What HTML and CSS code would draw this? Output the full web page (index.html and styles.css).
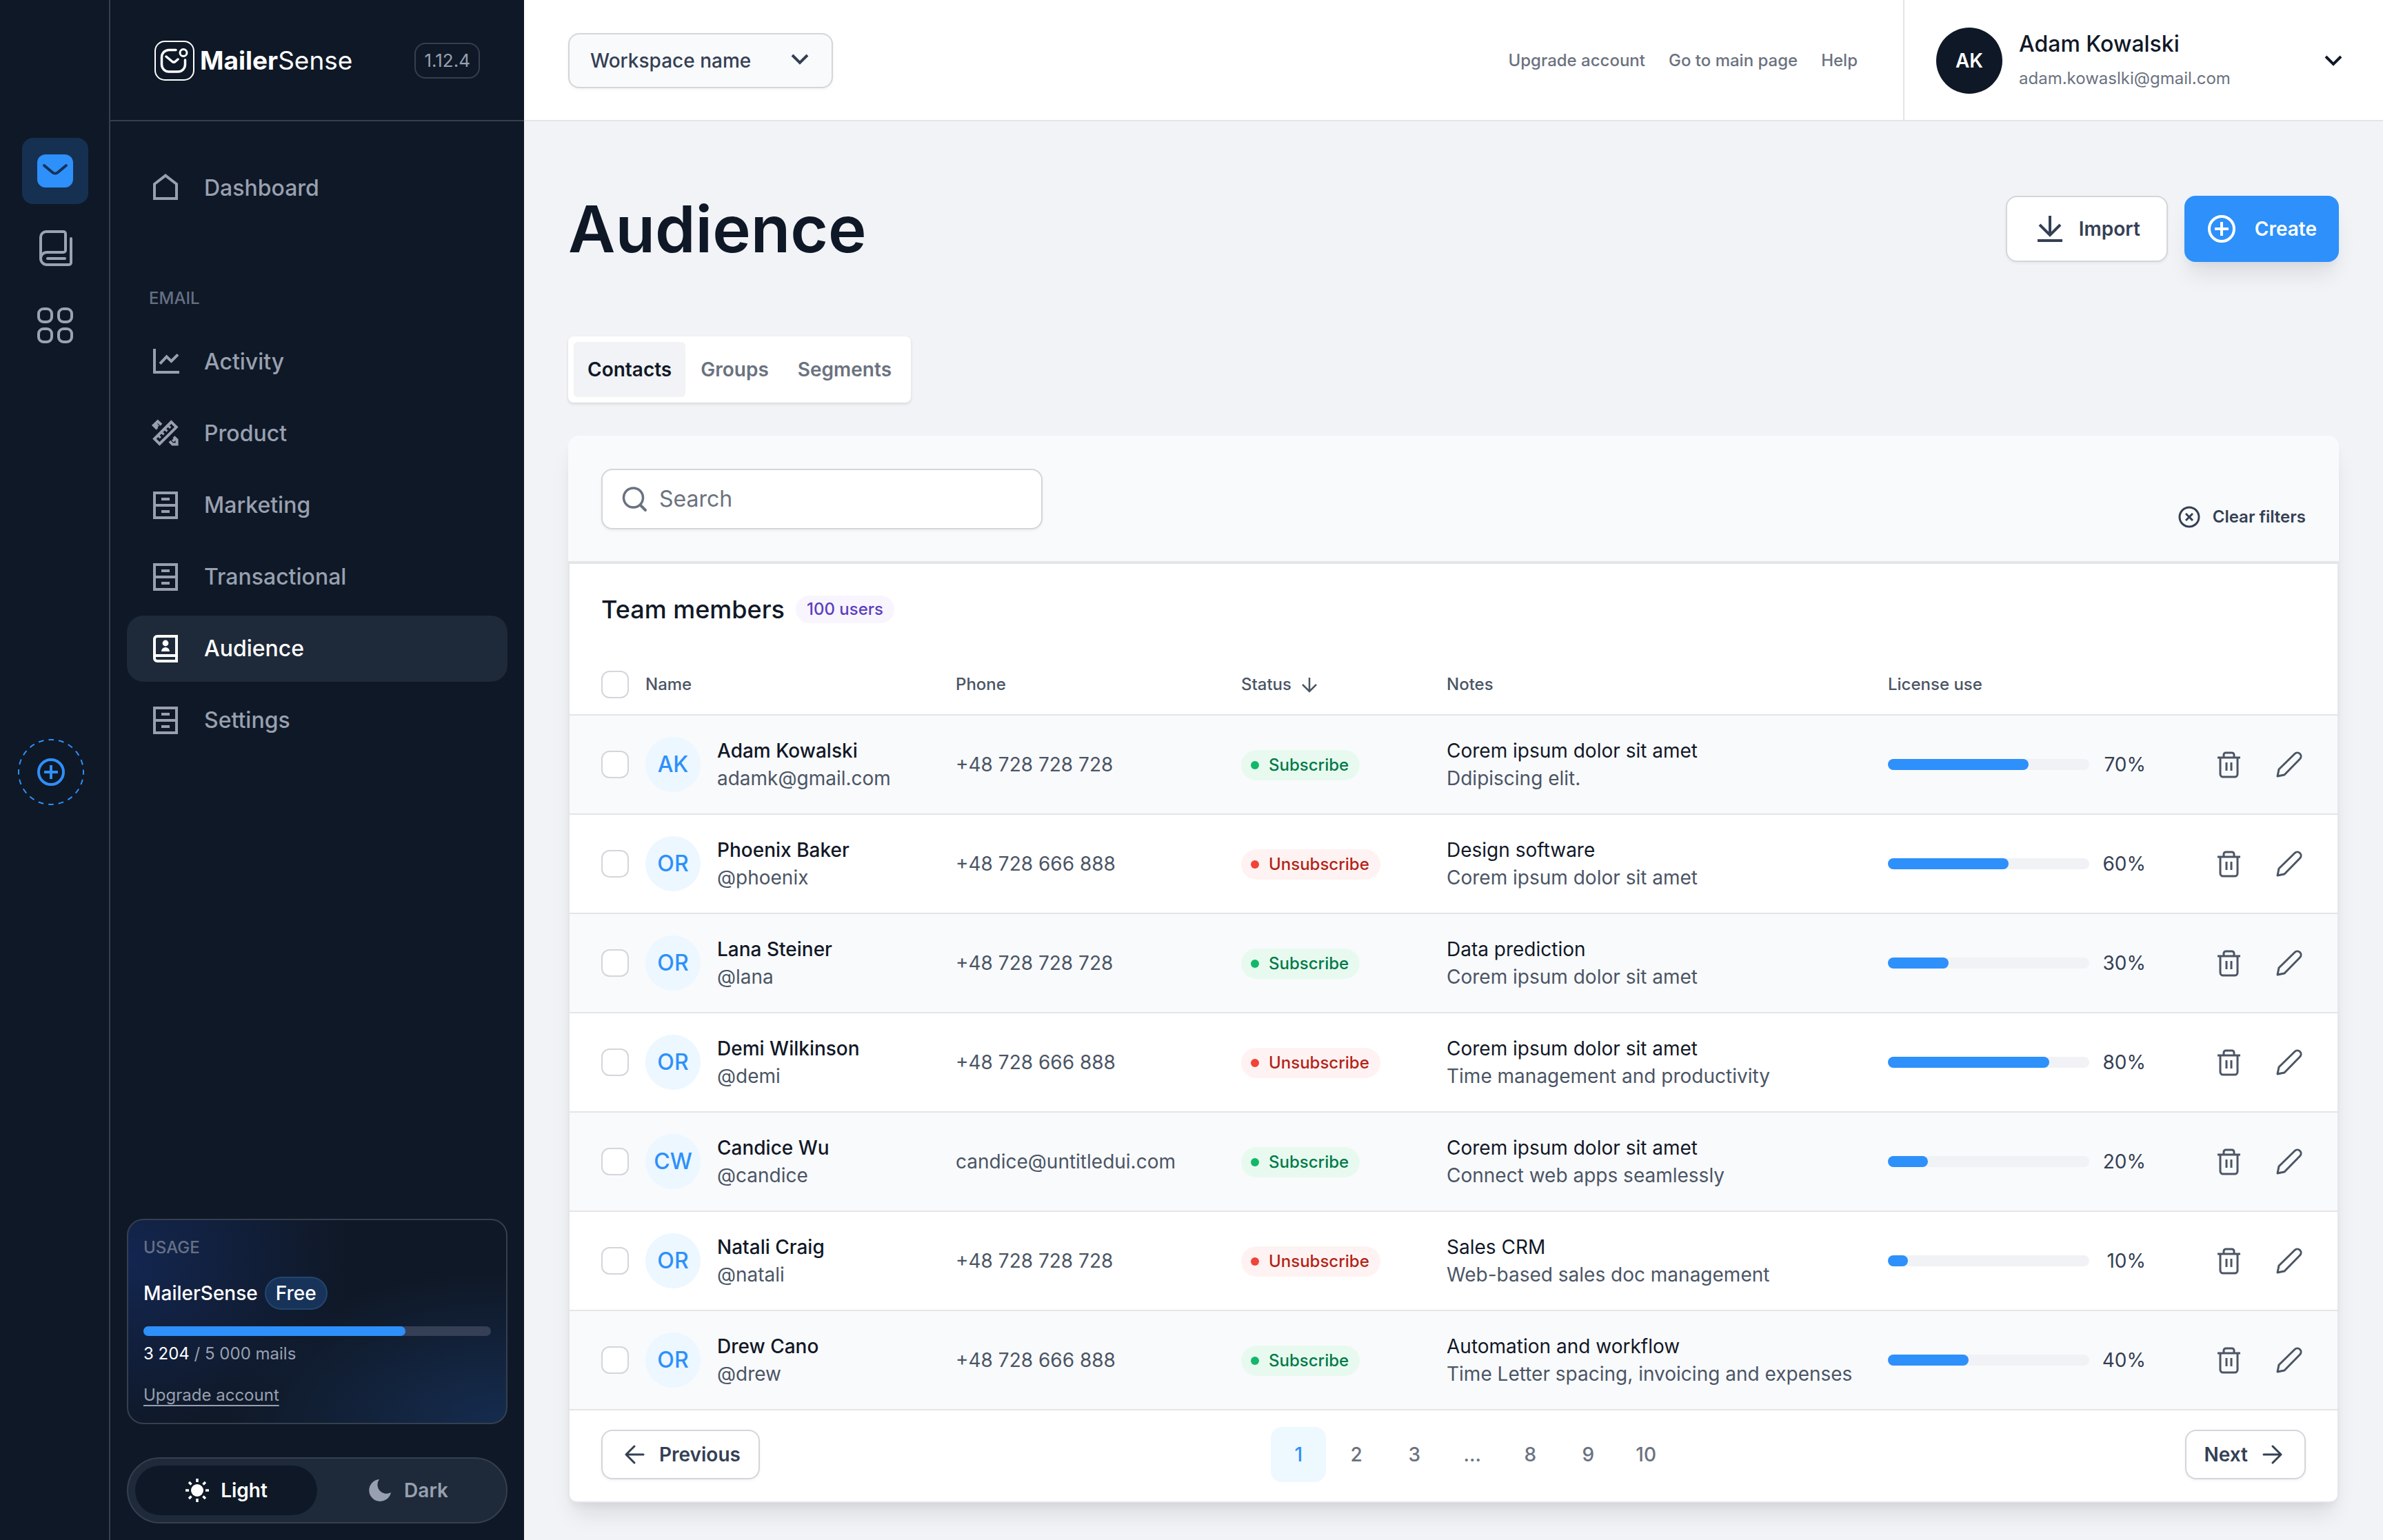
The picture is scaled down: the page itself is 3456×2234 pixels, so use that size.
FILE: index.html
```html
<!DOCTYPE html>
<html lang="en">
<head>
<meta charset="utf-8">
<title>MailerSense – Audience</title>
<meta name="viewport" content="width=device-width, initial-scale=1">
<link rel="stylesheet" href="styles.css">
</head>
<body>
<svg class="sprite" aria-hidden="true">
  <symbol id="i-cabinet" viewBox="0 0 24 24"><path d="M4 3h16v18H4zM4 12h16M9 7.5h6M9 16.5h6" fill="none" stroke="currentColor" stroke-width="2"/></symbol>
  <symbol id="i-chevron" viewBox="0 0 40 40"><path d="M9 14l11 11 11-11" fill="none" stroke="currentColor" stroke-width="4"/></symbol>
  <symbol id="i-plus-circle" viewBox="0 0 40 40"><circle cx="20" cy="20" r="18" fill="none" stroke="currentColor" stroke-width="4"/><path d="M20 10v20M10 20h20" fill="none" stroke="currentColor" stroke-width="4"/></symbol>
  <symbol id="i-trash" viewBox="0 0 40 40"><path d="M4 10h33M13 10V6a3 3 0 0 1 3-3h9a3 3 0 0 1 3 3v4M8 10v24a4 4 0 0 0 4 4h17a4 4 0 0 0 4-4V10M17 17v12M24 17v12" fill="none" stroke="currentColor" stroke-width="3"/></symbol>
  <symbol id="i-pencil" viewBox="0 0 40 40"><path d="M3 37l2-10L28 4.500a5 5 0 0 1 7.500 7.500L13 35z" fill="none" stroke="currentColor" stroke-width="3" stroke-linejoin="round"/></symbol>
  <symbol id="i-arrow" viewBox="0 0 32 32"><path d="M3 16h25M16 4l12 12-12 12" fill="none" stroke="currentColor" stroke-width="3" stroke-linecap="round" stroke-linejoin="round"/></symbol>
</svg>

<div class="app">
  <aside class="rail">
    <nav class="rail-nav" aria-label="Apps">
      <a class="rail-link is-active" href="#" aria-label="Mail">
        <svg class="icon-56" viewBox="0 0 56 56"><rect x="2" y="4" width="52" height="48" rx="12" fill="#2e90fa"/><path d="M12 20l12 10a6 6 0 0 0 8 0l12-10" fill="none" stroke="#163257" stroke-width="4" stroke-linecap="round"/></svg>
      </a>
      <a class="rail-link" href="#" aria-label="Library">
        <svg class="icon-56" viewBox="0 0 56 56"><path d="M7 43V12a8 8 0 0 1 8-8h25a3 3 0 0 1 3 3v24a3 3 0 0 1-3 3H16a9 9 0 0 0 0 18h32a3 3 0 0 0 3-3V14M17 43h25" fill="none" stroke="currentColor" stroke-width="4" stroke-linecap="round"/></svg>
      </a>
      <a class="rail-link" href="#" aria-label="All apps">
        <svg class="icon-56" viewBox="0 0 56 56" fill="none" stroke="currentColor" stroke-width="4"><rect x="4" y="4" width="19" height="19" rx="7"/><rect x="33" y="4" width="19" height="19" rx="7"/><rect x="4" y="33" width="19" height="19" rx="7"/><rect x="33" y="33" width="19" height="19" rx="7"/></svg>
      </a>
    </nav>
    <button class="rail-add" type="button" aria-label="Add app">
      <svg class="rail-ring" viewBox="0 0 96 96"><circle cx="48" cy="48" r="47" fill="none" stroke="currentColor" stroke-width="2" stroke-dasharray="7.700 7.060" stroke-dashoffset="3.850"/></svg>
      <svg class="icon-40" viewBox="0 0 40 40"><use href="#i-plus-circle"/></svg>
    </button>
  </aside>

  <aside class="sidebar">
    <header class="brand">
      <a class="brand-link" href="#">
        <svg class="brand-logo" viewBox="0 0 58 58" fill="none" stroke="currentColor"><rect x="1" y="1" width="56" height="56" rx="14" stroke-width="2"/><path d="M31 13.500H21A10.500 10.500 0 0 0 10.500 24v10.500A10.500 10.500 0 0 0 21 45h13a10.500 10.500 0 0 0 10.500-10.500V28" stroke-width="3.500" stroke-linecap="round"/><path d="M17 23l9 7.500q2 1.500 4 0l4-3.500" stroke-width="3.500" stroke-linecap="round"/><circle cx="42" cy="17.500" r="5" stroke-width="3"/></svg>
        <span class="brand-name"><b>Mailer</b>Sense</span>
      </a>
      <span class="version">1.12.4</span>
    </header>

    <nav class="menu" aria-label="Main">
      <a class="menu-item" href="#"><svg class="icon-48" viewBox="0 0 24 24"><path d="M4 9l8-6.200L20 9v10.500H4z" fill="none" stroke="currentColor" stroke-width="2"/></svg>Dashboard</a>
      <h2 class="menu-title">EMAIL</h2>
      <a class="menu-item" href="#"><svg class="icon-48" viewBox="0 0 24 24"><path d="M4 2.500v17h18M8 13.300l4.800-5.100 3.400 3.300L21 6.700" fill="none" stroke="currentColor" stroke-width="2"/></svg>Activity</a>
      <a class="menu-item" href="#"><svg class="icon-48" viewBox="0 0 24 24" fill="none" stroke="currentColor"><path d="M16.200 3.600l3.700 3.700L7.700 19.500l-3.700-3.700z" stroke-width="2"/><path d="M6.500 13.200l1.900 1.900M8.900 10.800l1.900 1.900M11.300 8.400l1.900 1.900M13.700 6l1.900 1.900" stroke-width="1.600"/><path d="M6 8.600L3.400 6l3-2.900L9 5.600M5 7.200l1.700-1.700M15 17.600l2.100 2.200h3.200v-3.200L18 14.300M17.200 17.600l1.500-1.500" stroke-width="2"/></svg>Product</a>
      <a class="menu-item" href="#"><svg class="icon-48" viewBox="0 0 24 24"><use href="#i-cabinet"/></svg>Marketing</a>
      <a class="menu-item" href="#"><svg class="icon-48" viewBox="0 0 24 24"><use href="#i-cabinet"/></svg>Transactional</a>
      <a class="menu-item is-active" href="#" aria-current="page"><svg class="icon-48" viewBox="0 0 24 24"><path d="M20 3H6a2 2 0 0 0-2 2v14a2 2 0 0 0 2 2h14zM4 17h16" fill="none" stroke="currentColor" stroke-width="2"/><circle cx="12" cy="8" r="2.200" fill="currentColor"/><path d="M9 14a3 3 0 0 1 6 0z" fill="currentColor"/></svg>Audience</a>
      <a class="menu-item" href="#"><svg class="icon-48" viewBox="0 0 24 24"><use href="#i-cabinet"/></svg>Settings</a>
    </nav>

    <section class="usage">
      <h2 class="usage-title">USAGE</h2>
      <p class="usage-plan">MailerSense <span class="plan-badge">Free</span></p>
      <div class="usage-bar"><div class="usage-fill" style="width:75.4%"></div></div>
      <p class="usage-count"><span class="usage-used">3 204</span> / 5 000 mails</p>
      <a class="usage-link" href="#">Upgrade account</a>
    </section>

    <div class="theme" role="group" aria-label="Theme">
      <button class="theme-option is-active" type="button" aria-pressed="true"><svg class="icon-36" viewBox="0 0 36 36"><circle cx="18" cy="18" r="9" fill="currentColor"/><path d="M18 1v5M18 30v5M1 18h5M30 18h5M6 6l3.500 3.500M26.500 26.500L30 30M6 30l3.500-3.500M26.500 9.500L30 6" stroke="currentColor" stroke-width="3.500"/></svg>Light</button>
      <button class="theme-option" type="button" aria-pressed="false"><svg class="icon-36" viewBox="0 0 36 36"><path d="M16 2a16 16 0 1 0 17 19A13 13 0 0 1 16 2z" fill="currentColor"/></svg>Dark</button>
    </div>
  </aside>

  <div class="page">
    <header class="topbar">
      <div class="workspace">
        <select class="workspace-select" aria-label="Workspace"><option>Workspace name</option></select>
        <svg class="workspace-chevron" viewBox="0 0 40 40"><use href="#i-chevron"/></svg>
      </div>
      <nav class="top-links" aria-label="Account links">
        <a href="#">Upgrade account</a>
        <a href="#">Go to main page</a>
        <a href="#">Help</a>
      </nav>
      <button class="user" type="button">
        <span class="user-avatar">AK</span>
        <span class="user-text"><span class="user-name">Adam Kowalski</span><span class="user-mail">adam.kowaslki@gmail.com</span></span>
        <svg class="icon-40" viewBox="0 0 40 40"><use href="#i-chevron"/></svg>
      </button>
    </header>

    <main class="content">
      <div class="page-head">
        <h1>Audience</h1>
        <div class="page-actions">
          <button class="btn btn-large" type="button"><svg class="icon-40" viewBox="0 0 40 40"><path d="M20 1v27M5 14l15 15 15-15M2 37h36" fill="none" stroke="currentColor" stroke-width="4"/></svg>Import</button>
          <button class="btn btn-large btn-primary" type="button"><svg class="icon-40" viewBox="0 0 40 40"><use href="#i-plus-circle"/></svg>Create</button>
        </div>
      </div>

      <div class="tabs" role="tablist">
        <button class="tab is-active" type="button" role="tab" aria-selected="true">Contacts</button>
        <button class="tab" type="button" role="tab" aria-selected="false">Groups</button>
        <button class="tab" type="button" role="tab" aria-selected="false">Segments</button>
      </div>

      <section class="card">
        <div class="filters">
          <label class="search">
            <svg class="icon-40" viewBox="0 0 40 40"><path d="M29 29l7 7" stroke="currentColor" stroke-width="4" stroke-linecap="round"/><circle cx="18.500" cy="18" r="14" fill="none" stroke="currentColor" stroke-width="3.500"/></svg>
            <input class="search-input" type="search" placeholder="Search" aria-label="Search">
          </label>
          <button class="clear" type="button"><svg class="icon-32" viewBox="0 0 32 32"><circle cx="16" cy="16" r="14" fill="none" stroke="currentColor" stroke-width="3"/><path d="M11 11l10 10M21 11L11 21" stroke="currentColor" stroke-width="3"/></svg>Clear filters</button>
        </div>

        <div class="panel">
          <div class="panel-head">
            <h2>Team members</h2>
            <span class="count">100 users</span>
          </div>

          <table class="members">
            <colgroup><col class="col-check"><col class="col-name"><col class="col-phone"><col class="col-status"><col><col class="col-license"><col class="col-actions"></colgroup>
            <thead>
              <tr>
                <th><input class="check" type="checkbox" aria-label="Select all"></th>
                <th>Name</th>
                <th>Phone</th>
                <th><span class="sort">Status<svg class="icon-24" viewBox="0 0 24 24"><path d="M12 2v20M2 12l10 10 10-10" fill="none" stroke="currentColor" stroke-width="2.500"/></svg></span></th>
                <th>Notes</th>
                <th>License use</th>
                <th aria-label="Actions"></th>
              </tr>
            </thead>
            <tbody>
              <tr>
                <td><input class="check" type="checkbox" aria-label="Select Adam Kowalski"></td>
                <td><div class="person"><span class="avatar">AK</span><div><div class="strong">Adam Kowalski</div><div>adamk@gmail.com</div></div></div></td>
                <td>+48 728 728 728</td>
                <td><span class="status status-on">Subscribe</span></td>
                <td><div class="note">Corem ipsum dolor sit amet</div><div>Ddipiscing elit.</div></td>
                <td><div class="license"><div class="track"><div class="fill" style="width:70%"></div></div><span class="percent">70%</span></div></td>
                <td><div class="actions"><button type="button" aria-label="Delete"><svg class="icon-40" viewBox="0 0 40 40"><use href="#i-trash"/></svg></button><button type="button" aria-label="Edit"><svg class="icon-40" viewBox="0 0 40 40"><use href="#i-pencil"/></svg></button></div></td>
              </tr>
              <tr>
                <td><input class="check" type="checkbox" aria-label="Select Phoenix Baker"></td>
                <td><div class="person"><span class="avatar">OR</span><div><div class="strong">Phoenix Baker</div><div>@phoenix</div></div></div></td>
                <td>+48 728 666 888</td>
                <td><span class="status status-off">Unsubscribe</span></td>
                <td><div class="note">Design software</div><div>Corem ipsum dolor sit amet</div></td>
                <td><div class="license"><div class="track"><div class="fill" style="width:60%"></div></div><span class="percent">60%</span></div></td>
                <td><div class="actions"><button type="button" aria-label="Delete"><svg class="icon-40" viewBox="0 0 40 40"><use href="#i-trash"/></svg></button><button type="button" aria-label="Edit"><svg class="icon-40" viewBox="0 0 40 40"><use href="#i-pencil"/></svg></button></div></td>
              </tr>
              <tr>
                <td><input class="check" type="checkbox" aria-label="Select Lana Steiner"></td>
                <td><div class="person"><span class="avatar">OR</span><div><div class="strong">Lana Steiner</div><div>@lana</div></div></div></td>
                <td>+48 728 728 728</td>
                <td><span class="status status-on">Subscribe</span></td>
                <td><div class="note">Data prediction</div><div>Corem ipsum dolor sit amet</div></td>
                <td><div class="license"><div class="track"><div class="fill" style="width:30%"></div></div><span class="percent">30%</span></div></td>
                <td><div class="actions"><button type="button" aria-label="Delete"><svg class="icon-40" viewBox="0 0 40 40"><use href="#i-trash"/></svg></button><button type="button" aria-label="Edit"><svg class="icon-40" viewBox="0 0 40 40"><use href="#i-pencil"/></svg></button></div></td>
              </tr>
              <tr>
                <td><input class="check" type="checkbox" aria-label="Select Demi Wilkinson"></td>
                <td><div class="person"><span class="avatar">OR</span><div><div class="strong">Demi Wilkinson</div><div>@demi</div></div></div></td>
                <td>+48 728 666 888</td>
                <td><span class="status status-off">Unsubscribe</span></td>
                <td><div class="note">Corem ipsum dolor sit amet</div><div>Time management and productivity</div></td>
                <td><div class="license"><div class="track"><div class="fill" style="width:80%"></div></div><span class="percent">80%</span></div></td>
                <td><div class="actions"><button type="button" aria-label="Delete"><svg class="icon-40" viewBox="0 0 40 40"><use href="#i-trash"/></svg></button><button type="button" aria-label="Edit"><svg class="icon-40" viewBox="0 0 40 40"><use href="#i-pencil"/></svg></button></div></td>
              </tr>
              <tr>
                <td><input class="check" type="checkbox" aria-label="Select Candice Wu"></td>
                <td><div class="person"><span class="avatar">CW</span><div><div class="strong">Candice Wu</div><div>@candice</div></div></div></td>
                <td>candice@untitledui.com</td>
                <td><span class="status status-on">Subscribe</span></td>
                <td><div class="note">Corem ipsum dolor sit amet</div><div>Connect web apps seamlessly</div></td>
                <td><div class="license"><div class="track"><div class="fill" style="width:20%"></div></div><span class="percent">20%</span></div></td>
                <td><div class="actions"><button type="button" aria-label="Delete"><svg class="icon-40" viewBox="0 0 40 40"><use href="#i-trash"/></svg></button><button type="button" aria-label="Edit"><svg class="icon-40" viewBox="0 0 40 40"><use href="#i-pencil"/></svg></button></div></td>
              </tr>
              <tr>
                <td><input class="check" type="checkbox" aria-label="Select Natali Craig"></td>
                <td><div class="person"><span class="avatar">OR</span><div><div class="strong">Natali Craig</div><div>@natali</div></div></div></td>
                <td>+48 728 728 728</td>
                <td><span class="status status-off">Unsubscribe</span></td>
                <td><div class="note">Sales CRM</div><div>Web-based sales doc management</div></td>
                <td><div class="license"><div class="track"><div class="fill" style="width:10%"></div></div><span class="percent">10%</span></div></td>
                <td><div class="actions"><button type="button" aria-label="Delete"><svg class="icon-40" viewBox="0 0 40 40"><use href="#i-trash"/></svg></button><button type="button" aria-label="Edit"><svg class="icon-40" viewBox="0 0 40 40"><use href="#i-pencil"/></svg></button></div></td>
              </tr>
              <tr>
                <td><input class="check" type="checkbox" aria-label="Select Drew Cano"></td>
                <td><div class="person"><span class="avatar">OR</span><div><div class="strong">Drew Cano</div><div>@drew</div></div></div></td>
                <td>+48 728 666 888</td>
                <td><span class="status status-on">Subscribe</span></td>
                <td><div class="note">Automation and workflow</div><div>Time Letter spacing, invoicing and expenses</div></td>
                <td><div class="license"><div class="track"><div class="fill" style="width:40%"></div></div><span class="percent">40%</span></div></td>
                <td><div class="actions"><button type="button" aria-label="Delete"><svg class="icon-40" viewBox="0 0 40 40"><use href="#i-trash"/></svg></button><button type="button" aria-label="Edit"><svg class="icon-40" viewBox="0 0 40 40"><use href="#i-pencil"/></svg></button></div></td>
              </tr>
            </tbody>
          </table>

          <nav class="pager" aria-label="Pagination">
            <button class="btn btn-pager btn-prev" type="button"><svg class="icon-32 flip" viewBox="0 0 32 32"><use href="#i-arrow"/></svg>Previous</button>
            <div class="pages">
              <a class="page-link is-active" href="#" aria-current="page">1</a>
              <a class="page-link" href="#">2</a>
              <a class="page-link" href="#">3</a>
              <span class="page-link">...</span>
              <a class="page-link" href="#">8</a>
              <a class="page-link" href="#">9</a>
              <a class="page-link" href="#">10</a>
            </div>
            <button class="btn btn-pager btn-next" type="button">Next<svg class="icon-32" viewBox="0 0 32 32"><use href="#i-arrow"/></svg></button>
          </nav>
        </div>
      </section>
    </main>
  </div>
</div>
</body>
</html>
```
FILE: styles.css
```css
:root {
  --ink: #0f1826;
  --ink-soft: #1e2a39;
  --ink-line: #353f4e;
  --muted-dark: #98a0b0;
  --blue: #2e90fa;
  --text: #111827;
  --text-2: #344054;
  --text-3: #4b5565;
  --text-4: #6b7280;
  --line: #e3e5e7;
  --control-line: #d3d6da;
  --bg: #f1f3f6;
  --bg-soft: #f9fafc;
}

* {
  box-sizing: border-box;
}

body {
  margin: 0;
  font-family: Inter, "Liberation Sans", sans-serif;
  font-size: 28px;
  line-height: 40px;
  color: var(--text);
  background: var(--bg);
}

h1, h2, p {
  margin: 0;
  font-weight: 500;
}

a {
  color: inherit;
  text-decoration: none;
}

button, input, select {
  font: inherit;
  color: inherit;
  margin: 0;
}

button {
  padding: 0;
  border: 0;
  background: none;
  cursor: pointer;
}

svg {
  display: block;
  flex: none;
}

.sprite {
  position: absolute;
  width: 0;
  height: 0;
}

.icon-24 { width: 24px; height: 24px; }
.icon-32 { width: 32px; height: 32px; }
.icon-36 { width: 36px; height: 36px; }
.icon-40 { width: 40px; height: 40px; }
.icon-48 { width: 48px; height: 48px; }
.icon-56 { width: 56px; height: 56px; }

.flip {
  transform: rotate(180deg);
}

.app {
  display: grid;
  grid-template-columns: 160px 600px minmax(0, 1fr);
  min-height: 100vh;
}

/* App rail */

.rail {
  display: grid;
  grid-template-rows: 1fr auto 1fr;
  justify-items: start;
  padding: 6px 28px 0 26px;
  background: var(--ink);
  border-right: 2px solid var(--ink-line);
  color: #9ba3b3;
}

.rail-nav {
  display: flex;
  flex-direction: column;
  gap: 16px;
  padding: 194px 0 0 6px;
}

.rail-link {
  display: grid;
  place-items: center;
  width: 96px;
  height: 96px;
  border-radius: 16px;
}

.rail-link.is-active {
  background: #163052;
}

.rail-add {
  position: relative;
  display: grid;
  place-items: center;
  width: 96px;
  height: 96px;
  color: var(--blue);
}

.rail-ring {
  position: absolute;
  inset: 0;
}

/* Sidebar */

.sidebar {
  display: flex;
  flex-direction: column;
  padding-bottom: 24px;
  background: var(--ink);
  color: var(--muted-dark);
}

.brand {
  display: flex;
  align-items: center;
  justify-content: space-between;
  height: 176px;
  padding: 2px 64px 0;
  border-bottom: 2px solid var(--ink-line);
}

.brand-link {
  display: flex;
  align-items: center;
  gap: 8px;
  color: #fff;
}

.brand-logo {
  width: 58px;
  height: 58px;
}

.brand-name {
  font-size: 37px;
}

.brand-name b {
  font-weight: 700;
}

.version {
  padding: 4px 12px;
  border: 2px solid var(--ink-line);
  border-radius: 16px;
  font-size: 26px;
}

.menu {
  display: flex;
  flex-direction: column;
  gap: 8px;
  padding: 49px 24px 48px;
}

.menu-item {
  display: flex;
  align-items: center;
  gap: 32px;
  height: 96px;
  padding: 0 32px;
  border-radius: 24px;
  font-size: 32px;
  font-weight: 500;
}

.menu-item.is-active {
  background: var(--ink-soft);
  color: #fff;
}

.menu-title {
  padding: 86px 32px 18px;
  font-size: 24px;
  line-height: 36px;
  color: #667085;
}

.usage {
  display: flex;
  flex-direction: column;
  align-items: flex-start;
  margin: auto 24px 48px;
  padding: 24px 22px;
  border: 2px solid var(--ink-line);
  border-radius: 24px;
  background:
    radial-gradient(ellipse 320px 260px at 0 20%, #132650, transparent),
    radial-gradient(ellipse 420px 220px at 100% 100%, #152c4f, transparent),
    var(--ink);
  font-size: 24px;
  line-height: 32px;
}

.usage-title {
  font-size: 24px;
  color: #667085;
}

.usage-plan {
  display: flex;
  align-items: center;
  gap: 10px;
  margin-top: 26px;
  font-size: 28px;
  color: #fff;
}

.plan-badge {
  padding: 6px 14px;
  border: 2px solid #23466e;
  border-radius: 24px;
  background: #17335a;
}

.usage-bar {
  width: 100%;
  height: 14px;
  margin: 24px 0 10px;
  border-radius: 7px;
  background: #353f56;
}

.usage-fill {
  height: 100%;
  border-radius: 7px;
  background: var(--blue);
}

.usage-count {
  font-weight: 400;
}

.usage-used {
  color: #fff;
}

.usage-link {
  margin-top: 28px;
  text-decoration: underline;
  text-decoration-thickness: 2px;
  text-underline-offset: 6px;
  text-decoration-skip-ink: none;
}

.theme {
  display: grid;
  grid-template-columns: 1fr 1fr;
  margin: 0 24px;
  padding: 10px;
  border: 2px solid var(--ink-line);
  border-radius: 48px;
  background: var(--ink-soft);
}

.theme-option {
  display: flex;
  align-items: center;
  justify-content: center;
  gap: 16px;
  height: 72px;
  border-radius: 36px;
  font-weight: 600;
}

.theme-option.is-active {
  background: var(--ink);
  color: #fff;
}

/* Top bar */

.page {
  display: flex;
  flex-direction: column;
}

.topbar {
  display: flex;
  align-items: center;
  height: 176px;
  padding-left: 64px;
  border-bottom: 2px solid var(--line);
  background: #fff;
}

.workspace {
  position: relative;
  padding-top: 2px;
}

.workspace-select {
  display: block;
  appearance: none;
  width: 384px;
  height: 80px;
  padding: 0 88px 0 30px;
  border: 2px solid var(--control-line);
  border-radius: 16px;
  background: var(--bg-soft);
  color: var(--text-2);
  font-weight: 500;
  box-shadow: 0 2px 4px rgba(16, 24, 40, 0.05);
}

.workspace-chevron {
  position: absolute;
  top: 20px;
  right: 28px;
  width: 40px;
  height: 40px;
  color: var(--text-2);
  pointer-events: none;
}

.top-links {
  display: flex;
  gap: 34px;
  margin-left: auto;
  padding: 2px 66px 0 0;
  font-size: 24px;
  font-weight: 500;
  color: var(--text-4);
}

.user {
  display: flex;
  align-items: center;
  gap: 24px;
  width: 696px;
  height: 100%;
  padding: 2px 52px 0 46px;
  border-left: 2px solid var(--line);
  text-align: left;
}

.user-avatar {
  display: grid;
  place-items: center;
  width: 96px;
  height: 96px;
  border-radius: 50%;
  background: var(--ink);
  color: #fff;
  font-weight: 600;
}

.user-text {
  display: flex;
  flex: 1;
  flex-direction: column;
  gap: 2px;
  padding-top: 2px;
  line-height: 48px;
}

.user-name {
  font-size: 32px;
  font-weight: 500;
}

.user-mail {
  font-size: 24px;
  color: var(--text-4);
}

/* Page head */

.content {
  padding: 108px 64px 54px;
}

.page-head {
  display: flex;
  align-items: center;
  justify-content: space-between;
}

h1 {
  font-size: 94px;
  font-weight: 600;
  line-height: 96px;
  color: var(--ink);
}

.page-actions {
  display: flex;
  gap: 24px;
}

.btn {
  display: flex;
  align-items: center;
  border: 2px solid var(--control-line);
  border-radius: 16px;
  background: #fff;
  color: var(--text-2);
  font-weight: 600;
  box-shadow: 0 2px 4px rgba(16, 24, 40, 0.05);
}

.btn-large {
  gap: 22px;
  height: 96px;
  padding: 0 38px 0 42px;
}

.btn-primary {
  gap: 28px;
  padding: 0 30px 0 32px;
  border-color: var(--blue);
  background: var(--blue);
  color: #fff;
  box-shadow: 0 24px 32px -8px rgba(16, 24, 40, 0.1), 0 8px 12px -4px rgba(16, 24, 40, 0.04);
}

.tabs {
  display: flex;
  gap: 2px;
  width: fit-content;
  margin: 108px 0 48px;
  padding: 8px;
  border-radius: 8px;
  background: #fff;
  box-shadow: 0 2px 4px rgba(16, 24, 40, 0.12);
}

.tab {
  height: 80px;
  padding: 0 20px;
  border-radius: 6px;
  font-weight: 600;
  color: var(--text-4);
}

.tab.is-active {
  background: var(--bg);
  color: var(--text);
}

/* Members card */

.card {
  border-radius: 16px;
  box-shadow: 0 24px 32px -8px rgba(16, 24, 40, 0.1), 0 8px 12px -4px rgba(16, 24, 40, 0.05);
}

.filters {
  display: flex;
  align-items: flex-end;
  justify-content: space-between;
  padding: 48px 48px 46px;
  border-bottom: 2px solid var(--line);
  border-radius: 16px 16px 0 0;
  background: var(--bg-soft);
}

.search {
  display: flex;
  align-items: center;
  gap: 16px;
  width: 640px;
  height: 88px;
  padding: 0 26px;
  border: 2px solid var(--control-line);
  border-radius: 16px;
  background: #fff;
  color: var(--text-4);
  box-shadow: 0 2px 4px rgba(16, 24, 40, 0.05);
}

.search-input {
  flex: 1;
  min-width: 0;
  padding: 0;
  border: 0;
  outline: 0;
  background: none;
  font-size: 32px;
}

.search-input::placeholder {
  color: var(--text-4);
  opacity: 1;
}

.clear {
  display: flex;
  align-items: center;
  gap: 18px;
  font-size: 24px;
  line-height: 36px;
  font-weight: 600;
  color: var(--text-2);
}

.panel {
  border: 2px solid var(--line);
  border-radius: 0 0 12px 12px;
  background: #fff;
}

.panel-head {
  display: flex;
  align-items: center;
  gap: 16px;
  height: 132px;
  padding: 0 46px;
}

.panel-head h2 {
  font-size: 36px;
}

.count {
  padding: 0 16px;
  border-radius: 20px;
  background: #f9f5ff;
  color: #5b3fbf;
  font-size: 24px;
  font-weight: 500;
}

.members {
  width: 100%;
  table-layout: fixed;
  border-collapse: separate;
  border-spacing: 0;
  color: var(--text-3);
}

.col-check { width: 110px; }
.col-name { width: 450px; }
.col-phone { width: 414px; }
.col-status { width: 298px; }
.col-license { width: 454px; }
.col-actions { width: 198px; }

.members th,
.members td {
  padding: 0;
  border-bottom: 2px solid var(--line);
  text-align: left;
  white-space: nowrap;
}

.members th {
  height: 88px;
  font-size: 24px;
  font-weight: 500;
}

.members td {
  height: 144px;
}

.members th:first-child,
.members td:first-child {
  padding-left: 46px;
}

.members tbody tr:nth-child(odd) {
  background: var(--bg-soft);
}

.check {
  appearance: none;
  display: block;
  width: 40px;
  height: 40px;
  border: 2px solid var(--control-line);
  border-radius: 12px;
  background: #fff;
}

.sort {
  display: flex;
  align-items: center;
  gap: 14px;
}

.person {
  display: flex;
  align-items: center;
  gap: 24px;
}

.avatar {
  display: grid;
  place-items: center;
  width: 80px;
  height: 80px;
  border-radius: 50%;
  background: #ecf7ff;
  color: var(--blue);
  font-size: 32px;
  font-weight: 500;
}

.strong {
  color: var(--text);
  font-weight: 500;
}

.note {
  color: var(--text);
}

.status {
  display: inline-flex;
  align-items: center;
  gap: 14px;
  padding: 2px 16px 2px 14px;
  border-radius: 22px;
  font-size: 24px;
  font-weight: 500;
}

.status::before {
  content: "";
  width: 12px;
  height: 12px;
  border-radius: 50%;
}

.status-on { background: #e8faf0; color: #027a48; }
.status-on::before { background: #12b76a; }
.status-off { background: #fef3f2; color: #b42318; }
.status-off::before { background: #f04438; }

.license {
  display: flex;
  align-items: center;
}

.track {
  width: 292px;
  height: 16px;
  border-radius: 8px;
  background: #f1f2f5;
}

.fill {
  height: 100%;
  border-radius: 8px;
  background: var(--blue);
}

.percent {
  width: 82px;
  text-align: right;
  color: var(--text-2);
}

.actions {
  display: flex;
  justify-content: flex-end;
  gap: 48px;
  padding-right: 50px;
}

/* Pagination */

.pager {
  display: flex;
  align-items: center;
  justify-content: space-between;
  padding: 24px 46px 28px;
}

.btn-pager {
  gap: 20px;
  height: 72px;
}

.btn-prev {
  padding: 0 26px 0 30px;
}

.btn-next {
  padding: 0 30px 0 26px;
}

.pages {
  display: flex;
  gap: 4px;
}

.page-link {
  display: grid;
  place-items: center;
  width: 80px;
  height: 80px;
  border-radius: 16px;
  color: var(--text-4);
  font-weight: 500;
}

.page-link.is-active {
  background: #eef8ff;
  color: var(--blue);
}
```
